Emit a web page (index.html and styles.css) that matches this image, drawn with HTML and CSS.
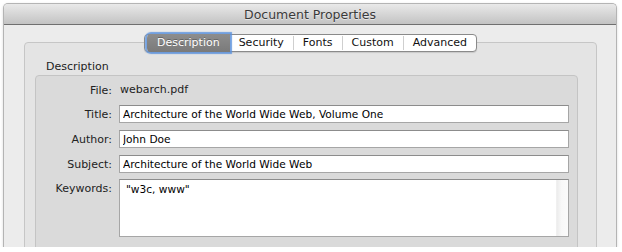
FILE: index.html
```html
<!DOCTYPE html>
<html lang="en">
<head>
    <meta charset="UTF-8">
    <title>Document Properties</title>
    <link rel="stylesheet" href="styles.css">
</head>
<body>
    <div class="window">
        <div class="titlebar">Document Properties</div>
        <div class="window-body">
            <div class="tabs">
                <span class="tab selected">Description</span>
                <span class="tab">Security</span>
                <span class="tab">Fonts</span>
                <span class="tab">Custom</span>
                <span class="tab">Advanced</span>
            </div>
            <div class="group">
                <div class="group-label">Description</div>
                <div class="fields">
                    <div class="row">
                        <label>File:</label>
                        <span class="value">webarch.pdf</span>
                    </div>
                    <div class="row">
                        <label for="title">Title:</label>
                        <input type="text" id="title" value="Architecture of the World Wide Web, Volume One">
                    </div>
                    <div class="row">
                        <label for="author">Author:</label>
                        <input type="text" id="author" value="John Doe">
                    </div>
                    <div class="row">
                        <label for="subject">Subject:</label>
                        <input type="text" id="subject" value="Architecture of the World Wide Web">
                    </div>
                    <div class="row row-top">
                        <label>Keywords:</label>
                        <div class="textarea">
                            <span class="textarea-text">"w3c, www"</span>
                            <div class="scroll-track"></div>
                        </div>
                    </div>
                </div>
            </div>
        </div>
    </div>
</body>
</html>
```

FILE: styles.css
```css
body {
    margin: 0;
    padding: 3px 5px 0 3px;
    background: #fff;
    font-family: 'DejaVu Sans', 'Liberation Sans', sans-serif;
    font-size: 11px;
    color: #222;
}
.window {
    width: 612px;
    height: 243px;
    overflow: hidden;
    border: 1px solid #b4b4b4;
    border-bottom: none;
    border-radius: 5px 5px 0 0;
    background: #ececec;
    box-shadow: 0 1px 3px rgba(0,0,0,0.15);
}
.titlebar {
    height: 20px;
    line-height: 21px;
    text-align: center;
    font-size: 12.5px;
    color: #3a3a3a;
    background: linear-gradient(#e9e9e9, #d2d2d2 60%, #c3c3c3);
    border-bottom: 1px solid #6f6f6f;
    text-shadow: 0 1px 0 rgba(255,255,255,0.5);
}
.window-body {
    padding: 9px 19px 0 20px;
}
.tabs {
    position: relative;
    z-index: 1;
    display: flex;
    width: max-content;
    margin: 0 auto -10px auto;
    height: 16px;
    background: #fff;
    border: 1px solid #8a8a8a;
    border-radius: 4px;
    box-shadow: 0 1px 1px rgba(0,0,0,0.12);
}
.tab {
    padding: 0 9px;
    color: #111;
    border-left: 1px solid #cfcfcf;
    margin: 1px 0;
    line-height: 14px;
}
.tab:nth-child(2) {
    border-left: none;
}
.tab.selected {
    border-left: none;
    margin: -1px 0 -1px 2px;
    padding: 0 10px;
    line-height: 18px;
    color: #fff;
    background: linear-gradient(#8d8d8d, #7a7a7a);
    border-radius: 4px 0 0 4px;
    box-shadow: 0 0 1px 2px rgba(92,146,220,0.85);
    text-shadow: 0 -1px 0 rgba(0,0,0,0.3);
}
.group {
    background: #e4e4e4;
    border: 1px solid #c6c6c6;
    border-radius: 4px;
    padding: 0 18px 0 10px;
    height: 240px;
}
.group-label {
    margin: 17px 0 2px 11px;
    color: #222;
}
.fields {
    background: #dadada;
    border: 1px solid #c4c4c4;
    border-radius: 4px;
    padding: 6px 8px 12px 0;
}
.row {
    display: flex;
    align-items: center;
    margin-bottom: 7px;
}
.row:nth-child(4) {
    margin-bottom: 6px;
}
.row-top {
    align-items: flex-start;
}
.row label {
    width: 76px;
    margin-right: 7px;
    text-align: right;
}
.row-top label {
    padding-top: 3px;
}
.value {
    line-height: 16px;
    padding-left: 1px;
}
.row input[type="text"] {
    flex: 1;
    height: 18px;
    box-sizing: border-box;
    margin: 0;
    padding: 0 3px;
    border: 1px solid #a6a6a6;
    border-top-color: #8c8c8c;
    background: #fff;
    font-family: inherit;
    font-size: 10.6px;
    color: #000;
    outline: none;
}
.textarea {
    flex: 1;
    display: flex;
    height: 58px;
    box-sizing: border-box;
    border: 1px solid #a6a6a6;
    border-top-color: #8c8c8c;
    background: #fff;
    color: #000;
    font-size: 10.6px;
}
.textarea-text {
    flex: 1;
    padding: 3px 3px 0 6px;
}
.scroll-track {
    width: 11px;
    background: linear-gradient(to right, #ececec, #f8f8f8 40%, #fbfbfb);
    border-left: 1px solid #f0f0f0;
}
```
